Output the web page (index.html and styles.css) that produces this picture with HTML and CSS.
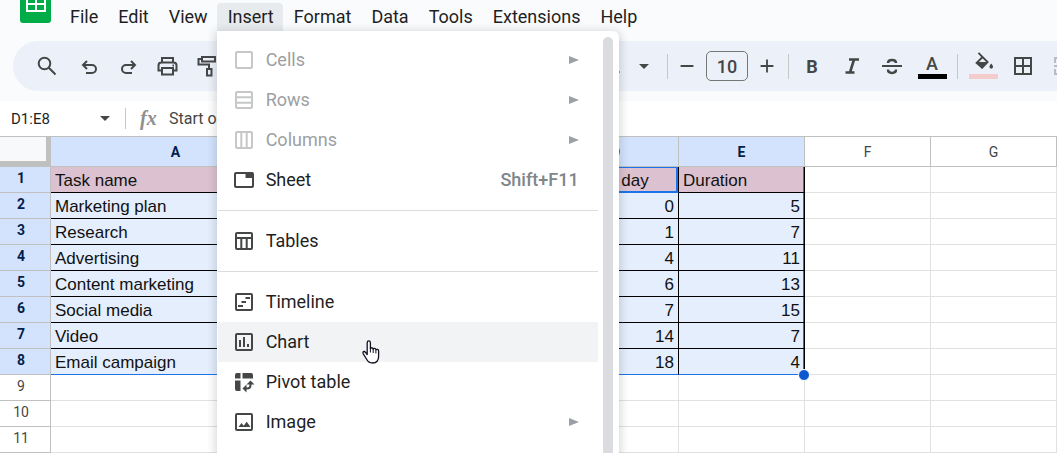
FILE: index.html
```html
<!DOCTYPE html>
<html lang="en">
<head>
    <meta charset="UTF-8">
    <meta name="viewport" content="width=device-width, initial-scale=1.0">
    <title>Task sheet</title>
    <link rel="stylesheet" href="styles.css">
</head>
<body>
    <header class="header">
        <div class="top">
            <svg class="logo" viewBox="0 0 31 41"><path fill="#00ac47" d="M0 0h31v38a3 3 0 0 1-3 3H3a3 3 0 0 1-3-3z"/><path fill="none" stroke="#fff" stroke-width="2" d="M7 14h18v15H7zM7 22h18M16 14v15"/></svg>
            <nav class="menubar">
                <button>File</button>
                <button>Edit</button>
                <button>View</button>
                <div class="menu-wrap">
                    <button class="open">Insert</button>
                    <div class="menu">
                        <div class="menu-list">
                            <button class="item" disabled>
                                <svg class="icon" viewBox="0 0 24 24"><rect x="4" y="4" width="16" height="16" rx="1"/></svg>
                                <span class="text">Cells</span>
                                <svg class="arrow" viewBox="0 0 10 10"><path d="M0 1l10 4-10 4z"/></svg>
                            </button>
                            <button class="item" disabled>
                                <svg class="icon" viewBox="0 0 24 24"><rect x="4" y="4" width="16" height="16" rx="1"/><path d="M4 9.300h16M4 14.700h16"/></svg>
                                <span class="text">Rows</span>
                                <svg class="arrow" viewBox="0 0 10 10"><path d="M0 1l10 4-10 4z"/></svg>
                            </button>
                            <button class="item" disabled>
                                <svg class="icon" viewBox="0 0 24 24"><rect x="4" y="4" width="16" height="16" rx="1"/><path d="M9.300 4v16M14.700 4v16"/></svg>
                                <span class="text">Columns</span>
                                <svg class="arrow" viewBox="0 0 10 10"><path d="M0 1l10 4-10 4z"/></svg>
                            </button>
                            <button class="item">
                                <svg class="icon" viewBox="0 0 24 24"><rect x="3" y="5" width="18" height="14" rx="1"/><path class="fill" d="M13.500 4.500H21V10h-7.500z"/></svg>
                                <span class="text">Sheet</span>
                                <span class="text shortcut">Shift+F11</span>
                            </button>
                            <hr>
                            <button class="item">
                                <svg class="icon" viewBox="0 0 24 24"><rect x="4" y="4" width="16" height="16" rx="1"/><path d="M4 9h16M9.300 9v11M14.700 9v11"/></svg>
                                <span class="text">Tables</span>
                            </button>
                            <hr>
                            <button class="item">
                                <svg class="icon" viewBox="0 0 24 24"><rect x="4" y="4" width="16" height="16" rx="1"/><path d="M13.500 8H18M9.500 12H14M6 16h5"/></svg>
                                <span class="text">Timeline</span>
                            </button>
                            <button class="item hover">
                                <svg class="icon" viewBox="0 0 24 24"><rect x="4" y="4" width="16" height="16" rx="1"/><path d="M8 10v7M12 7v10M16 14v3"/></svg>
                                <span class="text">Chart</span>
                                <svg class="pointer" viewBox="0 0 18 24"><path fill="#fff" stroke="#111122" stroke-width="1.300" stroke-linejoin="round" d="M5.200 14.500V2.700c0-2.400 3.200-2.400 3.200 0v6c.4-1.400 2.700-1.200 2.800.4.600-1.100 2.600-.8 2.700.7.900-.9 2.700-.4 2.700 1.300v5.200c0 4-2.200 6.700-6.100 6.700-3.200 0-4.500-1.300-5.700-3.500l-3.500-5.700c-1.200-2.100 1-3.100 2.200-1.500z"/><path stroke="#111122" d="M8.400 8.500v4M11.200 9v4M13.900 10v3.500"/></svg>
                            </button>
                            <button class="item">
                                <svg class="icon" viewBox="0 0 24 24"><path class="fill" d="M5 3h3.500v5.500H3V5a2 2 0 0 1 2-2zM10.500 3H19a2 2 0 0 1 2 2v3.500H10.500zM3 10.500h5.500V21H5a2 2 0 0 1-2-2z"/><path d="M18.500 13v2c0 2-1.300 3.500-3.500 3.500h-2"/><path class="fill" d="M14.500 14.500l4-4 4 4zM14.500 14.500v8l-4-4z"/></svg>
                                <span class="text">Pivot table</span>
                            </button>
                            <button class="item">
                                <svg class="icon" viewBox="0 0 24 24"><rect x="4" y="4" width="16" height="16" rx="1"/><path class="fill" d="M6.500 17l3-4 2.200 2.700 3-4 3.800 5.300z"/></svg>
                                <span class="text">Image</span>
                                <svg class="arrow" viewBox="0 0 10 10"><path d="M0 1l10 4-10 4z"/></svg>
                            </button>
                        </div>
                        <div class="scrollbar"></div>
                    </div>
                </div>
                <button>Format</button>
                <button>Data</button>
                <button>Tools</button>
                <button>Extensions</button>
                <button>Help</button>
            </nav>
        </div>

        <div class="toolbar">
            <button class="tool" aria-label="Search menus"><svg class="icon" viewBox="0 0 24 24"><circle cx="9.500" cy="9.500" r="5.800"/><path d="M13.800 13.800l6.700 6.700"/></svg></button>
            <button class="tool" aria-label="Undo"><svg class="icon" viewBox="0 0 24 24"><path d="M12 7l-4 4 4 4M8.500 11H17a4 4 0 0 1 0 8h-6"/></svg></button>
            <button class="tool" aria-label="Redo"><svg class="icon" viewBox="0 0 24 24"><path d="M16 7l4 4-4 4M19.500 11H11a4 4 0 0 0 0 8h6"/></svg></button>
            <button class="tool" aria-label="Print"><svg class="icon" viewBox="0 0 24 24"><path d="M7 8.500V4h11v4.500M7 16.500H3.500v-5c0-2 1-3 3-3h12c2 0 3 1 3 3v5H18M7 14h11v6.500H7z"/><path d="M17.500 11.500h1.500"/></svg></button>
            <button class="tool" aria-label="Paint format"><svg class="icon" viewBox="0 0 24 24"><path d="M7 3h13v4.500H7zM7 5H3.500v5.500H14V15M12 15h4.500v6.500H12z"/></svg></button>
            <button class="font-picker">Default... <svg class="caret" viewBox="0 0 10 5"><path d="M0 0h10L5 5z"/></svg></button>
            <span class="sep"></span>
            <button class="step" aria-label="Decrease font size"><svg class="icon" viewBox="0 0 24 24"><path d="M5 12h14"/></svg></button>
            <input class="size" type="text" value="10" aria-label="Font size">
            <button class="step" aria-label="Increase font size"><svg class="icon" viewBox="0 0 24 24"><path d="M5 12h14M12 5v14"/></svg></button>
            <span class="sep"></span>
            <button class="tool bold">B</button>
            <button class="tool" aria-label="Italic"><svg class="icon" viewBox="0 0 24 24"><path stroke-width="2.600" d="M9 5.500h10M5.500 18.500h9M14 5.500l-4 13"/></svg></button>
            <button class="tool" aria-label="Strikethrough"><svg class="icon" viewBox="0 0 24 24"><path d="M2 12h20"/><path stroke-width="2.500" d="M8 9c0-4 8-4 8 0M8 15.500c0 4.500 8 4.500 8 0"/></svg></button>
            <button class="tool color"><span class="letter">A</span><span class="bar black"></span></button>
            <span class="sep color-sep"></span>
            <button class="tool color" aria-label="Fill color"><svg class="icon" viewBox="0 0 24 24"><path d="M7 1l10 10-6 6-6-5 6-6"/><path class="fill" d="M4 11h14l-7 7.500zM21 12.500c1.300 1.800 2 2.800 2 3.700a2 2 0 0 1-4 0c0-.9.700-1.900 2-3.700z"/></svg><span class="bar pink"></span></button>
            <button class="tool" aria-label="Borders"><svg class="icon" viewBox="0 0 24 24"><path d="M4 4h16v16H4zM4 12h16M12 4v16"/></svg></button>
            <button class="tool faded" aria-label="Merge cells"><svg class="icon" viewBox="0 0 24 24"><path d="M9 4H4v5M4 15v5h5M15 4h5v5M20 15v5h-5M3 12h6M15 12h6"/></svg></button>
        </div>
    </header>

    <div class="formula-bar">
        <button class="name-box">D1:E8 <svg class="caret" viewBox="0 0 10 5"><path d="M0 0h10L5 5z"/></svg></button>
        <label class="fx" for="formula">fx</label>
        <input id="formula" class="formula" type="text" value="Start on day">
    </div>

    <table class="grid">
        <colgroup>
            <col class="col-head"><col class="col-a"><col><col><col><col><col><col>
        </colgroup>
        <thead>
            <tr><th class="corner"></th><th class="on">A</th><th class="on">B</th><th class="on">C</th><th class="on">D</th><th class="on">E</th><th>F</th><th>G</th></tr>
        </thead>
        <tbody>
            <tr class="sel title"><th>1</th><td>Task name</td><td></td><td></td><td class="active">Start on day</td><td>Duration</td><td></td><td></td></tr>
            <tr class="sel"><th>2</th><td>Marketing plan</td><td></td><td></td><td>0</td><td>5</td><td></td><td></td></tr>
            <tr class="sel"><th>3</th><td>Research</td><td></td><td></td><td>1</td><td>7</td><td></td><td></td></tr>
            <tr class="sel"><th>4</th><td>Advertising</td><td></td><td></td><td>4</td><td>11</td><td></td><td></td></tr>
            <tr class="sel"><th>5</th><td>Content marketing</td><td></td><td></td><td>6</td><td>13</td><td></td><td></td></tr>
            <tr class="sel"><th>6</th><td>Social media</td><td></td><td></td><td>7</td><td>15</td><td></td><td></td></tr>
            <tr class="sel"><th>7</th><td>Video</td><td></td><td></td><td>14</td><td>7</td><td></td><td></td></tr>
            <tr class="sel last"><th>8</th><td>Email campaign</td><td></td><td></td><td>18</td><td>4<span class="handle"></span></td><td></td><td></td></tr>
            <tr><th>9</th><td></td><td></td><td></td><td></td><td></td><td></td><td></td></tr>
            <tr><th>10</th><td></td><td></td><td></td><td></td><td></td><td></td><td></td></tr>
            <tr><th>11</th><td></td><td></td><td></td><td></td><td></td><td></td><td></td></tr>
        </tbody>
    </table>
</body>
</html>
```

FILE: styles.css
```css
:root {
    --color-ink: #444746;
    --color-text: #1f1f1f;
    --color-header: #f9fbfd;
    --color-toolbar: #ecf0f9;
    --color-line: #c0c0c0;
    --color-grid: #e1e1e1;
    --color-blue: #1a73e8;
}
* {
    box-sizing: border-box;
}
body {
    margin: 0;
    height: 100vh;
    overflow: hidden;
    background: #fff;
    font-family: Roboto, sans-serif;
    font-size: 18px;
    color: var(--color-text);
}
button, input {
    font: inherit;
    color: inherit;
    background: none;
    border: none;
    padding: 0;
    margin: 0;
}
svg {
    flex: none;
}
.icon {
    width: 24px;
    height: 24px;
    fill: none;
    stroke: var(--color-ink);
    stroke-width: 2;
}
.icon .fill {
    fill: var(--color-ink);
    stroke: none;
}

/* menu bar */
.header {
    padding-bottom: 10px;
    background: var(--color-header);
}
.top {
    display: flex;
    align-items: flex-start;
    height: 41px;
    padding-left: 20px;
}
.logo {
    width: 31px;
    height: 41px;
    margin-top: -18px;
    margin-right: 8px;
}
.menubar {
    display: flex;
    padding-top: 3px;
}
.menubar > button, .open {
    height: 28px;
    padding: 0 9px 2px 11px;
    white-space: nowrap;
}
.menu-wrap {
    position: relative;
}
.open {
    background: #e8ebee;
    border-radius: 4px 4px 0 0;
}
.menu {
    position: absolute;
    z-index: 5;
    top: 28px;
    left: 0;
    display: flex;
    gap: 5px;
    width: 402px;
    min-height: calc(100vh - 31px);
    padding: 6px 6px 0 0;
    background: #fff;
    border-radius: 0 6px 0 0;
    box-shadow: 0 2px 8px 2px rgba(60, 64, 67, 0.2);
}
.menu-list {
    flex: 1;
    padding: 3px 0 0 1px;
}
.scrollbar {
    width: 10px;
    border-radius: 5px 5px 0 0;
    background: #dadce0;
}
.item {
    position: relative;
    display: flex;
    align-items: center;
    gap: 10px;
    width: 100%;
    height: 40px;
    padding: 0 19px 0 14px;
    text-align: left;
}
.text {
    padding-bottom: 2px;
}
.item:disabled {
    color: #9c9fa3;
}
.item:disabled .icon {
    stroke: #c6c7c8;
}
.item.hover {
    background: #f1f3f4;
}
.arrow {
    width: 10px;
    height: 10px;
    margin-left: auto;
    fill: #9aa0a6;
}
.shortcut {
    margin-left: auto;
    font-weight: 500;
    color: #80868b;
}
.menu hr {
    height: 1px;
    margin: 10px 0;
    border: none;
    background: #dadce0;
}
.pointer {
    position: absolute;
    left: 144px;
    top: 18px;
    width: 18px;
    height: 24px;
    fill: none;
}

/* toolbar */
.toolbar {
    display: flex;
    align-items: center;
    height: 50px;
    margin-left: 13px;
    padding-left: 14px;
    border-radius: 25px 0 0 25px;
    background: var(--color-toolbar);
    overflow: hidden;
    color: var(--color-ink);
}
.toolbar > * {
    flex: none;
}
.tool {
    display: flex;
    align-items: center;
    justify-content: center;
    width: 40px;
    height: 38px;
}
.tool.bold {
    font-weight: 700;
}
.font-picker {
    display: flex;
    align-items: center;
    justify-content: flex-end;
    gap: 18px;
    width: 422px;
}
.caret {
    width: 10px;
    height: 5px;
    fill: var(--color-ink);
}
.sep {
    width: 1px;
    height: 25px;
    background: #c7c7c7;
}
.font-picker + .sep {
    margin-left: 18px;
}
.step {
    display: flex;
    justify-content: center;
    width: 38px;
}
.step .icon {
    width: 22px;
    height: 22px;
}
.size {
    width: 42px;
    height: 30px;
    border: 1px solid #747775;
    border-radius: 5px;
    text-align: center;
    font-weight: 500;
}
.step + .sep {
    margin: 0 3px 0 2px;
}
.color {
    flex-direction: column;
    justify-content: flex-start;
    height: 28px;
}
.letter {
    height: 22px;
    line-height: 24px;
    font-weight: 500;
}
.color .icon {
    height: 22px;
}
.bar {
    width: 29px;
    height: 5px;
}
.black {
    background: #000;
}
.pink {
    background: #f4cccc;
}
.color-sep {
    margin: 0 5px;
}
.faded {
    opacity: 0.3;
}

/* formula bar */
.formula-bar {
    display: flex;
    align-items: center;
    height: 35px;
    font-size: 16px;
}
.name-box {
    display: flex;
    align-items: center;
    justify-content: space-between;
    width: 126px;
    height: 21px;
    padding: 0 15px 0 11px;
    border-right: 1px solid #c7c7c7;
    font-size: 15px;
}
.fx {
    width: 43px;
    padding-left: 14px;
    font-family: "Liberation Serif", serif;
    font-size: 20px;
    font-style: italic;
    font-weight: 700;
    color: #8f8f8f;
}
.formula {
    flex: 1;
    color: var(--color-ink);
}

/* sheet */
.grid {
    width: 100%;
    table-layout: fixed;
    border-spacing: 0;
    border-top: 1px solid var(--color-line);
}
.grid col {
    width: 126px;
}
.grid .col-head {
    width: 51px;
}
.grid .col-a {
    width: 250px;
}
.grid th, .grid td {
    height: 26px;
    padding: 0 4px;
    border: solid var(--color-grid);
    border-width: 0 1px 1px 0;
    line-height: 20px;
    white-space: nowrap;
}
.grid th {
    border-color: var(--color-line);
    font-size: 14px;
    font-weight: 400;
    color: var(--color-ink);
}
.grid thead th {
    height: 30px;
}
.grid thead .on, .sel th {
    background: #d3e3fd;
    color: #041e49;
    font-weight: 700;
}
.grid .corner {
    background: #f8f9fa;
    border-width: 0 5px 6px 0;
}
.grid tbody th {
    padding: 0 8px 3px 0;
}
.grid td {
    font-family: "Liberation Sans", Arial, sans-serif;
    font-size: 17px;
    color: #111;
    padding-top: 2px;
}
.sel td:nth-child(-n+6) {
    background: #e4eefd;
    border-color: #000;
}
.sel td:nth-child(n+3) {
    text-align: right;
}
.title td:nth-child(-n+6) {
    background: #dcc2d0;
    text-align: left;
}
.sel td:nth-child(6) {
    position: relative;
    box-shadow: inset -1px 0 var(--color-blue);
}
.title .active {
    box-shadow: inset 0 1px var(--color-blue), inset -2px 0 var(--color-blue), inset 0 -1px var(--color-blue);
}
.title td.active {
    border-bottom-color: var(--color-blue);
}
.last td:nth-child(-n+6) {
    border-bottom-color: var(--color-blue);
}
.handle {
    position: absolute;
    right: -6px;
    bottom: -7px;
    width: 12px;
    height: 12px;
    border: 1px solid #fff;
    border-radius: 50%;
    background: #0b57d0;
}
```
